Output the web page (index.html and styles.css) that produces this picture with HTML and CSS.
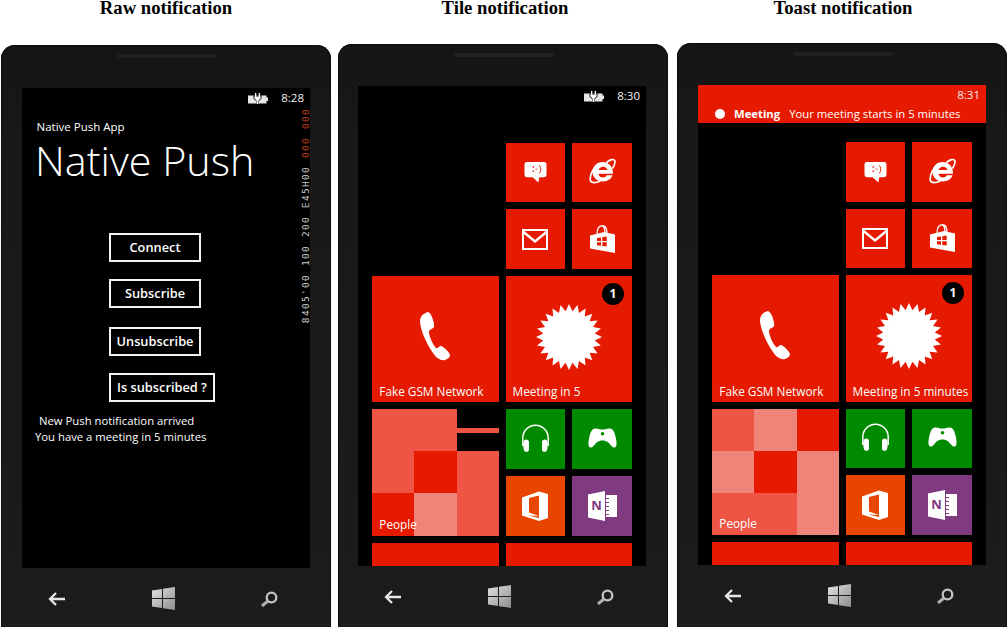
FILE: index.html
```html
<!DOCTYPE html>
<html lang="en">
<head>
<meta charset="utf-8">
<title>Push notification types</title>
<link rel="stylesheet" href="styles.css">
</head>
<body>
<svg class="sprite" aria-hidden="true">
  <defs>
    <linearGradient id="winfill" x1="0" y1="0" x2="1" y2="1"><stop offset="0" stop-color="#e4e4e4"/><stop offset="1" stop-color="#8c8c8c"/></linearGradient>
  </defs>
  <symbol id="i-status" viewBox="0 0 20 11"><path d="M0 2.500h18.500v2H20v3.500h-1.500v2.500H0z" fill="#e6e6e6"/><path d="M5.500 2.500h8v3l-2.500 2.500v3H8V8L5.500 5.500z" fill="#000"/><path d="M7 3.500V0h1.300v3.500zM10.700 3.500V0H12v3.500zM6.300 3.500h6.400v1.800L10.500 7.500V11h-2V7.500L6.300 5.300z" fill="#fff"/></symbol>
  <symbol id="i-msg" viewBox="0 0 24 23"><path d="M3 1h18a2.500 2.500 0 0 1 2.500 2.500v11A2.500 2.500 0 0 1 21 17h-5l-1 5.500L9 17H3a2.500 2.500 0 0 1-2.500-2.500v-11A2.500 2.500 0 0 1 3 1z" fill="#fff"/><path d="M9 5.500h1.500V7H9zM9 10h1.500v1.500H9zM12 8h2.200v1H12z" fill="#e51a00"/><path d="M16 4.500c2 2.500 2 6 0 8.500" fill="none" stroke="#e51a00" stroke-width="1"/></symbol>
  <symbol id="i-ie" viewBox="0 0 27 26"><path fill="#fff" fill-rule="evenodd" d="M24 15.800H9.500c.3 2.300 2 3.700 4.300 3.700 1.800 0 3.200-.8 4-2.200h5.800c-1.300 3.800-5.200 6.200-9.600 6.200C7.900 23.500 3.500 19.300 3.500 14S7.900 4 13.800 4 24.300 8.800 24 15.800zM9.600 12h8.900c-.4-1.900-2.100-3.300-4.400-3.300S10 10.100 9.600 12z"/><path fill="none" stroke="#fff" stroke-width="1.700" d="M9.500 5.500C4 9.500.4 18 1.400 22.500c.8 3 5.700 2.500 10 .5M17.500 4.500c3.500-3 7.500-4 8.300-1.800.6 2-.6 5-2.300 7.800"/></symbol>
  <symbol id="i-mail" viewBox="0 0 26 21"><rect x="1" y="1" width="24" height="19" fill="none" stroke="#fff" stroke-width="2"/><path d="M1.500 3L13 12.500 24.500 3" fill="none" stroke="#fff" stroke-width="2.400"/></symbol>
  <symbol id="i-store" viewBox="0 0 25 28"><path fill="#fff" d="M0 10.500L14 7l11 2.500V28L0 23.500z"/><path fill="none" stroke="#fff" stroke-width="1.300" d="M7 9.500C7 3 9.500 .8 11.500 .8S15 3 15 8.500M11.500 1c3-1 5.500 1 5.500 8"/><path fill="#e51a00" d="M7 13l4-.6v3.600H7zM12.300 12.200l4.400-.7V16h-4.400zM7 17.200h4v3.600l-4-.6zM12.300 17.200h4.400v4.400l-4.400-.7z"/></symbol>
  <symbol id="i-phone" viewBox="0 0 31 50"><path fill="#fff" d="M9 1C5 2 1 5 1 10c0 8 6 22 13 32 3 5 8 8 12 7 3-1 5-3 5-5 0-2-7-9-9-9s-3 3-5 2c-3-3-7-12-7-16 0-3 4-3 5-5 1-2-2-14-6-15z"/></symbol>
  <symbol id="i-star" viewBox="-33 -33 66 66"><g id="star-q" fill="#fff"><polygon points="0,0 33,0 25.800,3.400 31.900,8.500 24,10 28.600,16.500 20.600,15.800 23.300,23.300 15.800,20.600 16.500,28.600 10,24 8.500,31.900 3.400,25.800 0,33"/></g><use href="#star-q" transform="rotate(90)"/><use href="#star-q" transform="rotate(180)"/><use href="#star-q" transform="rotate(270)"/></symbol>
  <symbol id="i-head" viewBox="0 0 29 28"><path fill="none" stroke="#fff" stroke-width="1.500" d="M1.800 22V14a12.700 12.700 0 0 1 25.400 0v8"/><path fill="#fff" d="M3 16.500c2-2 5-1 5 1.500v7.500c0 2.500-3 3-4.500 1.500C2 25 2 18 3 16.500zM26 16.500c-2-2-5-1-5 1.500v7.500c0 2.500 3 3 4.500 1.500 1.500-2 1.500-9 .5-10.500z"/></symbol>
  <symbol id="i-pad" viewBox="0 0 29 20"><path fill="#fff" fill-rule="evenodd" d="M7 .5c2.500-.5 4 1 7.500 1s5-1.500 7.500-1c3 .5 4.500 3.500 5.500 8 1 4 1.500 8 .5 10s-3.500 1-5-1c-2-2.500-4-5-8.500-5s-6.500 2.500-8.500 5c-1.500 2-4 3-5 1S.5 12.500 1.500 8.500c1-4.500 2.500-7.500 5.500-8zM14.500 4a1.800 1.800 0 1 0 0 3.600 1.800 1.800 0 0 0 0-3.600z"/></symbol>
  <symbol id="i-office" viewBox="0 0 26 30"><path fill="#fff" fill-rule="evenodd" d="M0 6.500L17 .5l9 2.500v24l-9 3-17-5.500zM17 4.500L7 7v14.500l10 3.500-10.500-.5L17 27z"/></symbol>
  <symbol id="i-note" viewBox="0 0 29 30"><path fill="#fff" d="M0 3.500L17 0v30L0 26.500z"/><path fill="#fff" d="M18 4h11v22H18v-2h3v-1h-3v-3h3v-1h-3v-3h3v-1h-3v-3h3v-1h-3V8h3V7h-3z"/></symbol>
  <symbol id="i-back" viewBox="0 0 17 14"><path fill="none" stroke="#e6e6e6" stroke-width="2.300" d="M17 7H2M8 1L2 7l6 6"/></symbol>
  <symbol id="i-win" viewBox="0 0 23 23"><path fill="url(#winfill)" d="M0 3.500L10 2v9H0zM11 1.800L23 0v11H11zM0 12h10v9L0 19.500zM11 12h12v11l-12-1.800z"/></symbol>
  <symbol id="i-search" viewBox="0 0 17 16"><circle cx="10.500" cy="6.500" r="4.800" fill="none" stroke="#c4c4c4" stroke-width="2.300"/><path stroke="#b0b0b0" stroke-width="3" d="M7 10L1 15"/></symbol>
</svg>

<main class="page">
  <section class="col col-raw">
    <h2 class="title">Raw notification</h2>
    <div class="phone phone-raw">
      <div class="speaker"></div>
      <div class="screen">
        <div class="status">
          <svg class="status-icon"><use href="#i-status"/></svg>
          <span class="clock">8:28</span>
        </div>
        <p class="app-name">Native Push App</p>
        <h1 class="app-title">Native Push</h1>
        <div class="buttons">
          <button class="btn">Connect</button>
          <button class="btn">Subscribe</button>
          <button class="btn btn-apart">Unsubscribe</button>
          <button class="btn btn-wide">Is subscribed ?</button>
        </div>
        <p class="log log-first">New Push notification arrived</p>
        <p class="log log-second">You have a meeting in 5 minutes</p>
        <div class="counters">
          <span class="counter counter-hot">000</span>
          <span class="counter counter-hot">000</span>
          <span class="counter">E45H00</span>
          <span class="counter">200</span>
          <span class="counter">100</span>
          <span class="counter">8405'00</span>
        </div>
      </div>
      <nav class="hw">
        <svg class="hw-back"><use href="#i-back"/></svg>
        <svg class="hw-win"><use href="#i-win"/></svg>
        <svg class="hw-search"><use href="#i-search"/></svg>
      </nav>
    </div>
  </section>

  <section class="col col-tile">
    <h2 class="title">Tile notification</h2>
    <div class="phone phone-tile">
      <div class="speaker"></div>
      <div class="screen">
        <div class="status">
          <svg class="status-icon"><use href="#i-status"/></svg>
          <span class="clock">8:30</span>
        </div>
        <div class="tiles">
          <div class="tile small start"><svg class="ic-msg"><use href="#i-msg"/></svg></div>
          <div class="tile small"><svg class="ic-ie"><use href="#i-ie"/></svg></div>
          <div class="tile small start"><svg class="ic-mail"><use href="#i-mail"/></svg></div>
          <div class="tile small"><svg class="ic-store"><use href="#i-store"/></svg></div>
          <div class="tile medium"><svg class="ic-phone"><use href="#i-phone"/></svg><span class="label">Fake GSM Network</span></div>
          <div class="tile medium"><svg class="ic-star"><use href="#i-star"/></svg><span class="badge">1</span><span class="label">Meeting in 5</span></div>
          <div class="tile medium people">
            <i class="p-a p-tl"></i><i class="p-bar"></i><i class="p-r p-hole"></i><i class="p-a p-right"></i><i class="p-r p-bl"></i><i class="p-b p-bm"></i>
            <span class="label">People</span>
          </div>
          <div class="tile small green"><svg class="ic-head"><use href="#i-head"/></svg></div>
          <div class="tile small green"><svg class="ic-pad"><use href="#i-pad"/></svg></div>
          <div class="tile small orange"><svg class="ic-office"><use href="#i-office"/></svg></div>
          <div class="tile small purple"><svg class="ic-note"><use href="#i-note"/></svg><span class="note-n">N</span></div>
          <div class="tile medium"></div>
          <div class="tile medium"></div>
        </div>
      </div>
      <nav class="hw">
        <svg class="hw-back"><use href="#i-back"/></svg>
        <svg class="hw-win"><use href="#i-win"/></svg>
        <svg class="hw-search"><use href="#i-search"/></svg>
      </nav>
    </div>
  </section>

  <section class="col col-toast">
    <h2 class="title">Toast notification</h2>
    <div class="phone phone-toast">
      <div class="speaker"></div>
      <div class="screen">
        <div class="toast">
          <span class="clock toast-clock">8:31</span>
          <div class="toast-row">
            <span class="toast-dot"></span>
            <strong class="toast-head">Meeting</strong>
            <span class="toast-body">Your meeting starts in 5 minutes</span>
          </div>
        </div>
        <div class="tiles tiles-under">
          <div class="tile small start"><svg class="ic-msg"><use href="#i-msg"/></svg></div>
          <div class="tile small"><svg class="ic-ie"><use href="#i-ie"/></svg></div>
          <div class="tile small start"><svg class="ic-mail"><use href="#i-mail"/></svg></div>
          <div class="tile small"><svg class="ic-store"><use href="#i-store"/></svg></div>
          <div class="tile medium"><svg class="ic-phone"><use href="#i-phone"/></svg><span class="label">Fake GSM Network</span></div>
          <div class="tile medium"><svg class="ic-star"><use href="#i-star"/></svg><span class="badge">1</span><span class="label">Meeting in 5 minutes</span></div>
          <div class="tile medium people">
            <i class="p-a"></i><i class="p-b"></i><i class="p-r"></i><i class="p-b"></i><i class="p-r"></i><i class="p-b p-tall"></i><i class="p-a p-span"></i>
            <span class="label">People</span>
          </div>
          <div class="tile small green"><svg class="ic-head"><use href="#i-head"/></svg></div>
          <div class="tile small green"><svg class="ic-pad"><use href="#i-pad"/></svg></div>
          <div class="tile small orange"><svg class="ic-office"><use href="#i-office"/></svg></div>
          <div class="tile small purple"><svg class="ic-note"><use href="#i-note"/></svg><span class="note-n">N</span></div>
          <div class="tile medium"></div>
          <div class="tile medium"></div>
        </div>
      </div>
      <nav class="hw">
        <svg class="hw-back"><use href="#i-back"/></svg>
        <svg class="hw-win"><use href="#i-win"/></svg>
        <svg class="hw-search"><use href="#i-search"/></svg>
      </nav>
    </div>
  </section>
</main>
</body>
</html>
```

FILE: styles.css
```css
* { box-sizing: border-box; }
html, body { margin: 0; height: 100%; overflow: hidden; background: #fff; }
body { font-family: "Open Sans", "Noto Sans", sans-serif; color: #fff; }
.sprite { position: absolute; width: 0; height: 0; }
svg { display: block; }

.page { display: flex; height: 627px; }
.col { width: 330px; flex: none; }
.col-raw { margin-left: 1px; }
.col-tile { margin-left: 7px; }
.col-toast { margin-left: 9px; }

.title { margin: 0; height: 16px; font: bold 18.700px/16px "Liberation Serif", serif; color: #000; text-align: center; white-space: nowrap; }
.col-tile .title { margin-left: 4px; }
.col-toast .title { margin-left: 2px; }

.phone { position: relative; height: 600px; padding: 0 21px; background: linear-gradient(#151515 0, #181818 15%, #1c1c1c 100%); border-radius: 14px 14px 0 0; box-shadow: inset 0 0 0 1px #0c0c0c; }
.phone-raw { margin-top: 29px; padding-top: 43px; }
.phone-tile { margin-top: 28px; padding: 42px 22px 0 20px; }
.phone-toast { margin-top: 27px; padding-top: 42px; }
.speaker { position: absolute; top: 9px; left: 116px; width: 100px; height: 4px; border-radius: 2px; background: #202020; }

.screen { position: relative; width: 288px; height: 480px; background: #000; overflow: hidden; }

.status { display: flex; align-items: center; justify-content: flex-end; height: 20px; padding: 0 6px 0 0; }
.status-icon { width: 20px; height: 11px; margin-right: 13px; }
.clock { font-size: 11.500px; line-height: 20px; color: #f0f0f0; }

.app-name { margin: 11px 0 0 14.500px; font-size: 11.500px; line-height: 16px; }
.app-title { margin: -3px 0 0 13px; font-size: 41.300px; font-weight: 300; line-height: 56px; white-space: nowrap; }

.buttons { display: flex; flex-direction: column; align-items: flex-start; gap: 17px; margin: 45px 0 0 87px; }
.btn { width: 92px; height: 29px; padding: 0; background: #000; border: 2px solid #f2f2f2; color: #fff; font: 600 12.800px/25px "Open Sans", sans-serif; white-space: nowrap; }
.btn-apart { margin-top: 2px; }
.btn-wide { width: 106px; }

.log { margin: 0; font-size: 11.300px; line-height: 16px; white-space: nowrap; }
.log-first { margin-top: 11px; margin-left: 17px; }
.log-second { margin-left: 13px; }

.counters { position: absolute; top: 20px; right: -1px; width: 10px; display: flex; flex-direction: column; align-items: center; gap: 8px; }
.counter { writing-mode: vertical-rl; transform: rotate(180deg); font: 9.500px/10px "DejaVu Sans Mono", monospace; letter-spacing: 1.300px; color: #d0d0d0; white-space: nowrap; }
.counter-hot { color: #c2401f; }

.tiles { display: grid; grid-template-columns: repeat(4, 59.670px); grid-auto-rows: 59.670px; gap: 7px; padding: 36.670px 0 0 14.300px; }
.tiles-under { padding-top: 57px; }
.tile { position: relative; display: flex; align-items: center; justify-content: center; background: #e51a00; }
.start { grid-column-start: 3; }
.medium { grid-column-end: span 2; grid-row-end: span 2; }
.green { background: #008a00; }
.orange { background: #e84500; }
.purple { background: #7f3a80; }

.label { position: absolute; left: 7px; bottom: 3px; font-size: 11.800px; line-height: 16px; white-space: nowrap; }
.people .label { bottom: 4px; }
.badge { position: absolute; top: 7px; right: 8px; width: 22px; height: 22px; border-radius: 50%; background: #000; font-size: 12px; font-weight: 700; line-height: 22px; text-align: center; }
.note-n { position: absolute; left: 19px; top: 19px; font-size: 13px; font-weight: 700; line-height: 20px; color: #7f3a80; }

.ic-msg { width: 23px; height: 22px; }
.ic-ie { width: 27px; height: 26px; margin-top: -2px; }
.ic-mail { width: 26px; height: 21px; }
.ic-store { width: 25px; height: 28px; margin-top: -1px; }
.ic-phone { width: 31px; height: 50px; margin-top: -6px; margin-left: -2px; }
.ic-star { width: 66px; height: 66px; margin-top: -5px; }
.ic-head { width: 29px; height: 28px; margin-top: -2px; }
.ic-pad { width: 29px; height: 20px; margin-top: -2px; }
.ic-office { width: 26px; height: 30px; }
.ic-note { width: 29px; height: 30px; }

.people { display: grid; grid-template-columns: repeat(3, 1fr); grid-template-rows: repeat(3, 1fr); align-items: stretch; justify-content: stretch; background: #000; overflow: hidden; }
.people .label { z-index: 1; }
.p-a { background: #ef5545; }
.p-b { background: #f08478; }
.p-r { background: #e51a00; }
.p-tl { grid-column: 1 / span 2; grid-row: 1 / span 2; }
.p-bar { grid-column: 3; grid-row: 1; align-self: center; height: 5px; background: #ef5545; }
.p-hole { grid-column: 2; grid-row: 2; }
.p-right { grid-column: 3; grid-row: 2 / span 2; }
.p-bl { grid-column: 1; grid-row: 3; }
.p-bm { grid-column: 2; grid-row: 3; }
.p-tall { grid-row-end: span 2; }
.p-span { grid-column-end: span 2; }

.toast { position: absolute; top: 0; left: 0; right: 0; height: 38px; padding: 0 6px 0 17px; background: #e51a00; }
.toast-clock { display: block; text-align: right; line-height: 19px; }
.toast-row { display: flex; align-items: center; height: 19px; font-size: 11.300px; white-space: nowrap; }
.toast-dot { width: 10px; height: 10px; border-radius: 50%; background: #fff; margin-right: 9px; }
.toast-head { font-weight: 700; margin-right: 9px; }

.hw { display: grid; grid-template-columns: 109px 104px 24px; align-items: center; height: 22px; margin: 19px 0 0 21px; }
.hw-back { width: 17px; height: 14px; margin-left: 5px; }
.hw-win { width: 23px; height: 23px; }
.hw-search { width: 17px; height: 16px; margin-left: 5px; }
```
